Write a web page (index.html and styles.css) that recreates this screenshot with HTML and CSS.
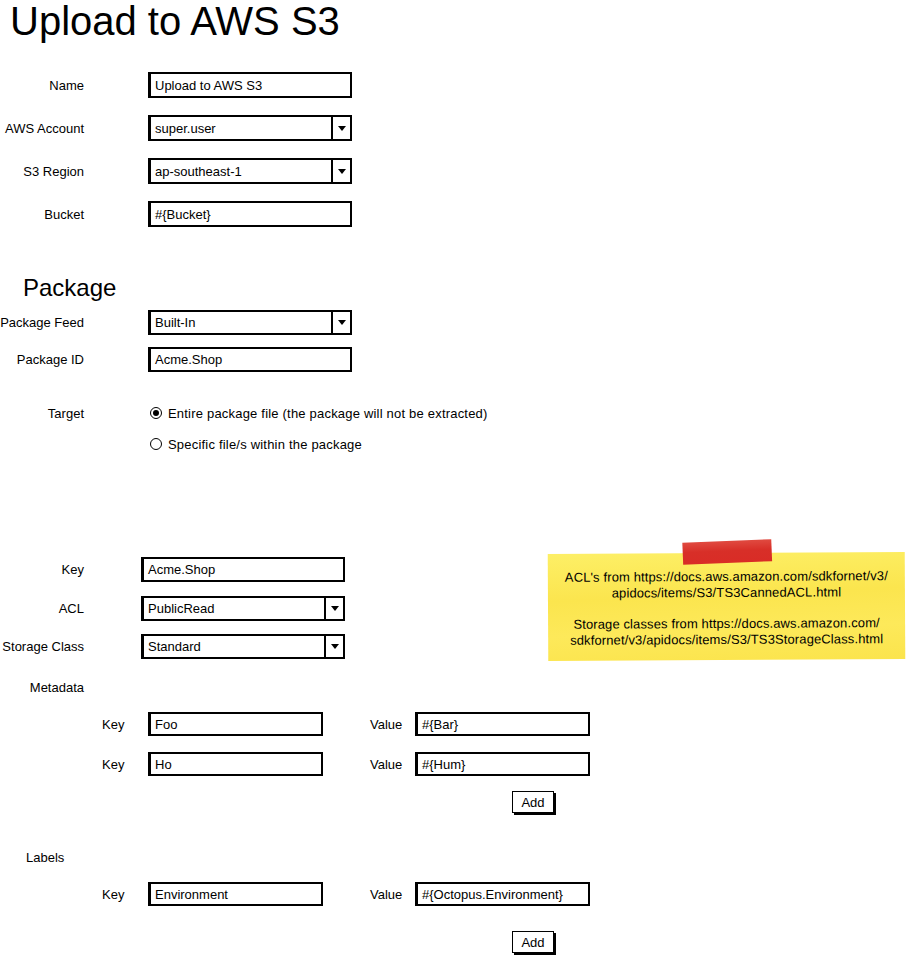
FILE: index.html
```html
<!DOCTYPE html>
<html>
<head>
<meta charset="utf-8">
<title>Upload to AWS S3</title>
<link rel="stylesheet" href="styles.css">
</head>
<body>
<div class="page">
  <h1 class="title">Upload to AWS S3</h1>

  <div class="group g1">
    <div class="row">
      <div class="label">Name</div>
      <div class="field"><span class="val">Upload to AWS S3</span></div>
    </div>
    <div class="row">
      <div class="label">AWS Account</div>
      <div class="field select"><span class="val">super.user</span><span class="arrow"><span class="tri"></span></span></div>
    </div>
    <div class="row">
      <div class="label">S3 Region</div>
      <div class="field select"><span class="val">ap-southeast-1</span><span class="arrow"><span class="tri"></span></span></div>
    </div>
    <div class="row">
      <div class="label">Bucket</div>
      <div class="field"><span class="val">#{Bucket}</span></div>
    </div>
  </div>

  <h2 class="heading">Package</h2>

  <div class="group g2">
    <div class="row r25">
      <div class="label">Package Feed</div>
      <div class="field select"><span class="val">Built-In</span><span class="arrow"><span class="tri"></span></span></div>
    </div>
    <div class="row r25">
      <div class="label">Package ID</div>
      <div class="field"><span class="val">Acme.Shop</span></div>
    </div>
  </div>

  <div class="group g3">
    <div class="row rr">
      <div class="label">Target</div>
      <div class="radio-wrap"><span class="radio on"></span><span class="rtext">Entire package file (the package will not be extracted)</span></div>
    </div>
    <div class="row rr">
      <div class="label"></div>
      <div class="radio-wrap"><span class="radio"></span><span class="rtext">Specific file/s within the package</span></div>
    </div>
  </div>

  <div class="group g4">
    <div class="row r25">
      <div class="label">Key</div>
      <div class="field f2"><span class="val">Acme.Shop</span></div>
    </div>
    <div class="row r25">
      <div class="label">ACL</div>
      <div class="field f2 select"><span class="val">PublicRead</span><span class="arrow"><span class="tri"></span></span></div>
    </div>
    <div class="row r25">
      <div class="label">Storage Class</div>
      <div class="field f2 select"><span class="val">Standard</span><span class="arrow"><span class="tri"></span></span></div>
    </div>
  </div>

  <div class="group g5">
    <div class="row rl">
      <div class="label">Metadata</div>
    </div>
    <div class="kv kv1">
      <span class="klabel">Key</span>
      <div class="field small"><span class="val">Foo</span></div>
      <span class="vlabel">Value</span>
      <div class="field small"><span class="val">#{Bar}</span></div>
    </div>
    <div class="kv kv2">
      <span class="klabel">Key</span>
      <div class="field small"><span class="val">Ho</span></div>
      <span class="vlabel">Value</span>
      <div class="field small"><span class="val">#{Hum}</span></div>
    </div>
    <div class="btn-row b1"><span class="btn">Add</span></div>
  </div>

  <div class="group g6">
    <div class="row rl">
      <div class="labels-label">Labels</div>
    </div>
    <div class="kv kv1">
      <span class="klabel">Key</span>
      <div class="field small"><span class="val">Environment</span></div>
      <span class="vlabel">Value</span>
      <div class="field small"><span class="val">#{Octopus.Environment}</span></div>
    </div>
    <div class="btn-row b2"><span class="btn">Add</span></div>
  </div>

  <div class="note">
    <div class="tape"></div>
    <p>ACL's from https://docs.aws.amazon.com/sdkfornet/v3/<br>apidocs/items/S3/TS3CannedACL.html</p>
    <p>Storage classes from https://docs.aws.amazon.com/<br>sdkfornet/v3/apidocs/items/S3/TS3StorageClass.html</p>
  </div>
</div>
</body>
</html>
```

FILE: styles.css
```css
html, body {
  margin: 0;
  padding: 0;
  background: #fff;
}
body {
  font-family: "Liberation Sans", Arial, sans-serif;
  font-size: 13px;
  color: #000;
}
.page {
  position: relative;
  width: 908px;
  height: 958px;
  overflow: hidden;
}
.title {
  margin: 0;
  padding: 1px 0 0 10px;
  font-size: 40px;
  line-height: 40px;
  font-weight: normal;
}
.heading {
  margin: 0;
  padding-left: 23px;
  font-size: 24px;
  line-height: 24px;
  font-weight: normal;
}
.group {
  display: flex;
  flex-direction: column;
}
.g1 { margin-top: 31px; gap: 17px; }
.g1 + .heading { margin-top: 49px; }
.g2 { margin-top: 10px; gap: 12px; }
.g3 { margin-top: 30px; gap: 9px; }
.g4 { margin-top: 102px; gap: 13px; }
.g4 .row + .row { margin-top: 1px; }
.g4 .row:last-child { margin-top: 0; }
.g5 { margin-top: 18px; }
.g6 { margin-top: 32px; }

.row {
  display: flex;
  align-items: center;
  height: 26px;
}
.row.r25 { height: 25px; }
.row.rr { height: 22px; }
.row.rl { height: 20px; }
.label {
  width: 84px;
  flex: none;
  text-align: right;
  white-space: nowrap;
}
.field {
  box-sizing: border-box;
  height: 100%;
  width: 204px;
  margin-left: 64px;
  border: 2px solid #000;
  border-left-width: 3px;
  display: flex;
  align-items: center;
  background: #fff;
  position: relative;
}
.field.f2 { margin-left: 57px; }
.val {
  padding-left: 4px;
  flex: 1;
  white-space: nowrap;
}
.select .arrow {
  width: 17px;
  height: 100%;
  border-left: 2px solid #000;
  display: flex;
  align-items: center;
  justify-content: center;
  flex: none;
}
.tri {
  width: 0;
  height: 0;
  border-left: 4px solid transparent;
  border-right: 4px solid transparent;
  border-top: 5px solid #000;
}
.radio-wrap {
  margin-left: 66px;
  display: flex;
  align-items: center;
}
.radio {
  box-sizing: border-box;
  width: 12px;
  height: 12px;
  border: 1.5px solid #000;
  border-radius: 50%;
  display: flex;
  align-items: center;
  justify-content: center;
  flex: none;
}
.radio.on::after {
  content: "";
  width: 6px;
  height: 6px;
  border-radius: 50%;
  background: #000;
}
.rtext {
  margin-left: 6px;
  white-space: nowrap;
  letter-spacing: 0.2px;
}
.kv {
  display: flex;
  align-items: center;
  height: 24px;
  padding-left: 102px;
}
.kv1 { margin-top: 15px; }
.kv2 { margin-top: 16px; }
.klabel { width: 46px; flex: none; }
.vlabel { width: 45px; flex: none; margin-left: 47px; }
.field.small {
  width: 175px;
  margin-left: 0;
}
.btn-row {
  padding-left: 512px;
  height: 24px;
  display: flex;
}
.b1 { margin-top: 15px; }
.b2 { margin-top: 25px; }
.btn {
  box-sizing: border-box;
  width: 42px;
  height: 22px;
  border: 1px solid #000;
  box-shadow: 2px 2px 0 #000;
  display: flex;
  align-items: center;
  justify-content: center;
  background: #fff;
}
.labels-label {
  padding-left: 26px;
}
.note {
  position: absolute;
  left: 548px;
  top: 553px;
  width: 357px;
  height: 107px;
  box-sizing: border-box;
  padding-top: 16px;
  background: linear-gradient(178deg, #fdef66 0%, #fbe54e 40%, #fde95a 70%, #fbe44c 100%);
  text-align: center;
  font-size: 13px;
  letter-spacing: 0.12px;
  line-height: 16px;
  transform: rotate(-0.3deg);
  white-space: nowrap;
}
.note p {
  margin: 0 0 15px 0;
}
.tape {
  position: absolute;
  left: 135px;
  top: -12px;
  width: 89px;
  height: 22px;
  background: linear-gradient(180deg, #e04a40 0%, #d82f28 45%, #d92c26 100%);
  transform: rotate(-2deg);
}
```
